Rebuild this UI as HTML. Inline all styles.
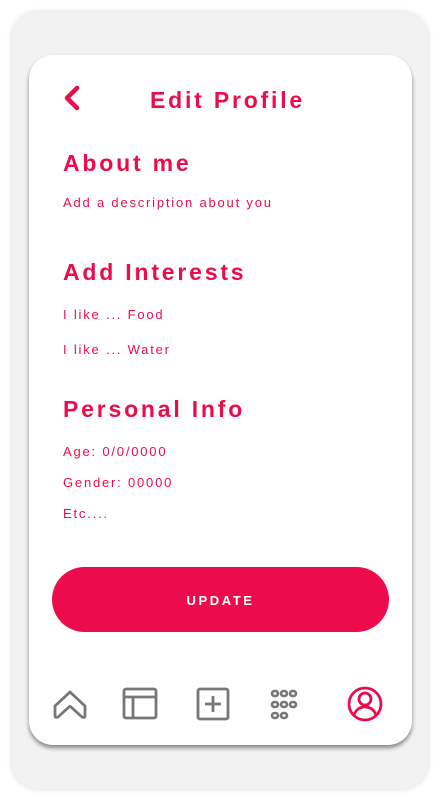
<!DOCTYPE html>
<html><head><style>
*{margin:0;padding:0;box-sizing:border-box}
body{width:440px;height:801px;background:#fff;font-family:"Liberation Sans",sans-serif;position:relative;overflow:hidden}
.outer{position:absolute;left:12px;top:12px;width:416px;height:777px;background:#f2f2f2;border-radius:26px;box-shadow:0 0 6px rgba(0,0,0,.15)}
.card{position:absolute;left:29px;top:55px;width:383px;height:690px;background:#fff;border-radius:24px;box-shadow:0 3px 4px rgba(0,0,0,.45)}
.c{color:#ec0c4c;position:absolute}
h1{font-size:23px;font-weight:bold;letter-spacing:2.8px}
.t{font-size:13px;letter-spacing:1.8px}
.btn{position:absolute;left:52px;top:567px;width:337px;height:65px;border-radius:33px;background:#ec0c4c;color:#fff;font-weight:bold;font-size:13px;letter-spacing:2.6px;text-align:center;line-height:67px}
svg{position:absolute}
</style></head><body>
<div class="outer"></div>
<div class="card"></div>
<svg style="left:60px;top:84px" width="24" height="30"><path d="M17 4 L7 14 L17 24" stroke="#ec0c4c" stroke-width="4.5" fill="none" stroke-linecap="round" stroke-linejoin="round"/></svg>
<h1 class="c" style="left:150px;top:87px">Edit Profile</h1>
<h1 class="c" style="left:63px;top:150px">About me</h1>
<div class="c t" style="left:63px;top:195px">Add a description about you</div>
<h1 class="c" style="left:63px;top:259px">Add Interests</h1>
<div class="c t" style="left:63px;top:307px">I like ... Food</div>
<div class="c t" style="left:63px;top:342px">I like ... Water</div>
<h1 class="c" style="left:63px;top:396px">Personal Info</h1>
<div class="c t" style="left:63px;top:444px">Age: 0/0/0000</div>
<div class="c t" style="left:63px;top:475px">Gender: 00000</div>
<div class="c t" style="left:63px;top:506px">Etc....</div>
<div class="btn">UPDATE</div>
<svg style="left:52px;top:688px" width="38" height="32"><path d="M3 18 L18 4 L33 18 L33 28 Q33 30 30 29 L19 19 Q18 18 17 19 L6 29 Q3 30 3 28 Z" stroke="#777" stroke-width="2.8" fill="none" stroke-linejoin="round"/></svg>
<svg style="left:122px;top:687px" width="36" height="34"><rect x="2" y="2" width="32" height="29" rx="2" stroke="#777" stroke-width="2.8" fill="none"/><path d="M2 10 H34 M11 10 V31" stroke="#777" stroke-width="2.8"/></svg>
<svg style="left:196px;top:687px" width="36" height="34"><rect x="2" y="2" width="30" height="30" rx="2" stroke="#777" stroke-width="2.8" fill="none"/><path d="M17 9 V25 M9 17 H25" stroke="#777" stroke-width="2.8"/></svg>
<svg style="left:270px;top:689px" width="36" height="32" fill="none" stroke="#777" stroke-width="2.6">
<rect x="2" y="2" width="6" height="5" rx="2.5"/><rect x="11" y="2" width="6" height="5" rx="2.5"/><rect x="20" y="2" width="6" height="5" rx="2.5"/>
<rect x="2" y="13" width="6" height="5" rx="2.5"/><rect x="11" y="13" width="6" height="5" rx="2.5"/><rect x="20" y="13" width="6" height="5" rx="2.5"/>
<rect x="2" y="24" width="6" height="5" rx="2.5"/><rect x="11" y="24" width="6" height="5" rx="2.5"/></svg>
<svg style="left:347px;top:686px" width="36" height="36" fill="none" stroke="#ec0c4c" stroke-width="2.8"><circle cx="18" cy="18" r="16"/><circle cx="18" cy="13" r="6"/><path d="M7 29 Q10 21 18 21 Q26 21 29 29"/></svg>
</body></html>
